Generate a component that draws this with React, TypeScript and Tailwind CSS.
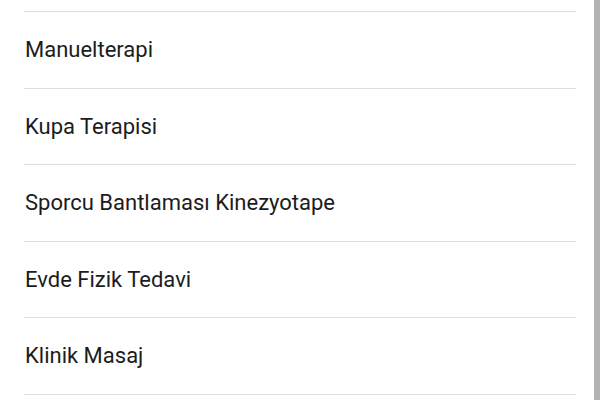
const ITEMS = ['Manuelterapi', 'Kupa Terapisi', 'Sporcu Bantlaması Kinezyotape', 'Evde Fizik Tedavi', 'Klinik Masaj'];

export default function App() {
  return (
    <div className="flex h-[400px] w-[600px] overflow-hidden bg-white font-['Roboto',sans-serif]">
      <div className="flex-1 pl-6 pr-[18px]">
        <div className="h-[12px] border-b border-[#e0e0e0]" />
        {ITEMS.map((item) => (
          <div key={item} className="flex h-[76.5px] items-center border-b border-[#e0e0e0] pl-px text-[22px] text-[#1c1c1c]">
            {item}
          </div>
        ))}
      </div>
      <div className="w-[6px] shrink-0 bg-[#b3b3b3]" />
    </div>
  );
}
